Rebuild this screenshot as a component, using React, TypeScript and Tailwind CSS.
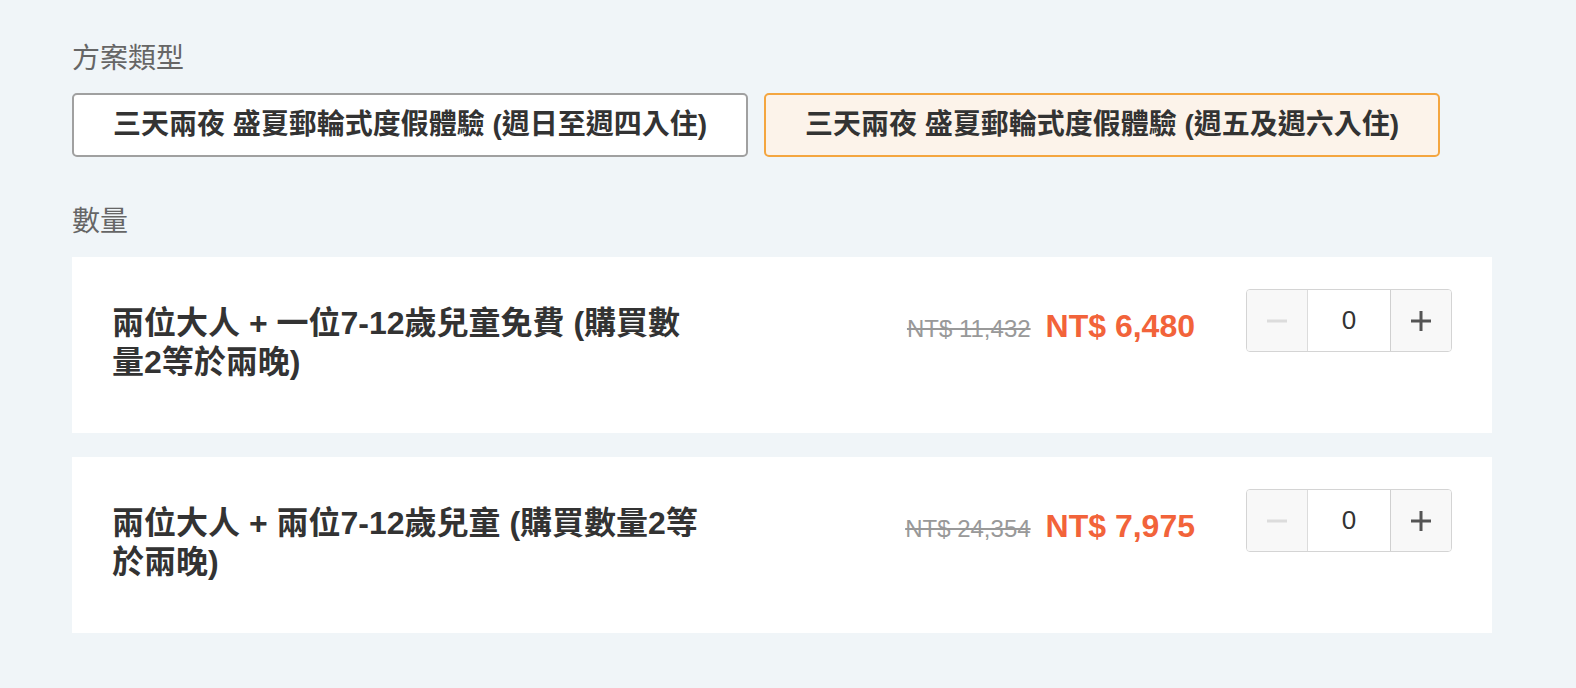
const font = {
  fontFamily: '"Liberation Sans", "Noto Sans CJK TC", sans-serif',
};

type Plan = { label: string; active?: boolean };

const plans: Plan[] = [
  { label: "三天兩夜 盛夏郵輪式度假體驗 (週日至週四入住)" },
  { label: "三天兩夜 盛夏郵輪式度假體驗 (週五及週六入住)", active: true },
];

type Item = { title: string; oldPrice: string; price: string; qty: number };

const items: Item[] = [
  {
    title: "兩位大人 + 一位7-12歲兒童免費 (購買數量2等於兩晚)",
    oldPrice: "NT$ 11,432",
    price: "NT$ 6,480",
    qty: 0,
  },
  {
    title: "兩位大人 + 兩位7-12歲兒童 (購買數量2等於兩晚)",
    oldPrice: "NT$ 24,354",
    price: "NT$ 7,975",
    qty: 0,
  },
];

const Stepper = ({ value }: { value: number }) => (
  <div className="flex h-[63px] w-[206px] overflow-hidden rounded-[4px] border-[1.5px] border-[#d4d4d4]">
    <button className="flex w-[61px] items-center justify-center border-r-[1.5px] border-[#dcdcdc] bg-[#f8f8f8]">
      <svg width="20" height="20" viewBox="0 0 20 20">
        <line x1="0" y1="10" x2="20" y2="10" stroke="#dcdcdc" strokeWidth="3" />
      </svg>
    </button>
    <div className="flex w-[82px] items-center justify-center bg-white text-[26px] text-[#333]">
      {value}
    </div>
    <button className="flex flex-1 items-center justify-center border-l-[1.5px] border-[#d0d0d0] bg-[#f8f8f8]">
      <svg width="20" height="20" viewBox="0 0 20 20">
        <line x1="0" y1="10" x2="20" y2="10" stroke="#555" strokeWidth="3" />
        <line x1="10" y1="0" x2="10" y2="20" stroke="#555" strokeWidth="3" />
      </svg>
    </button>
  </div>
);

export default function App() {
  return (
    <div
      className="min-h-[688px] w-full bg-[#f0f5f8] pl-[72px] pt-[39px]"
      style={font}
    >
      <div className="mb-[14px] text-[28px] leading-[40px] text-[#666]">
        方案類型
      </div>
      <div className="flex gap-4">
        {plans.map((p) => (
          <button
            key={p.label}
            className={
              p.active
                ? "flex h-[64px] w-[676px] items-center justify-center rounded-[5px] border-2 border-[#f4a640] bg-[#fcf3ea] text-[28px] font-bold text-[#333]"
                : "flex h-[64px] w-[676px] items-center justify-center rounded-[5px] border-2 border-[#a0a0a0] bg-white text-[28px] font-bold text-[#333]"
            }
          >
            {p.label}
          </button>
        ))}
      </div>

      <div className="mb-[15px] mt-[45px] text-[28px] leading-[40px] text-[#666]">
        數量
      </div>
      <div className="flex w-[1420px] flex-col gap-6">
        {items.map((it) => (
          <div
            key={it.title}
            className="flex items-start bg-white px-10 py-8"
          >
            <div className="w-[594px] pb-[19px] pt-[15px] text-[32px] font-bold leading-[39px] text-[#333]">
              {it.title}
            </div>
            <div className="ml-auto mt-[18px] flex items-baseline gap-[15px] leading-[38px]">
              <span className="text-[24px] text-[#999] line-through">
                {it.oldPrice}
              </span>
              <span className="text-[32px] font-bold text-[#f2633a]">
                {it.price}
              </span>
            </div>
            <div className="ml-[51px]">
              <Stepper value={it.qty} />
            </div>
          </div>
        ))}
      </div>
    </div>
  );
}
